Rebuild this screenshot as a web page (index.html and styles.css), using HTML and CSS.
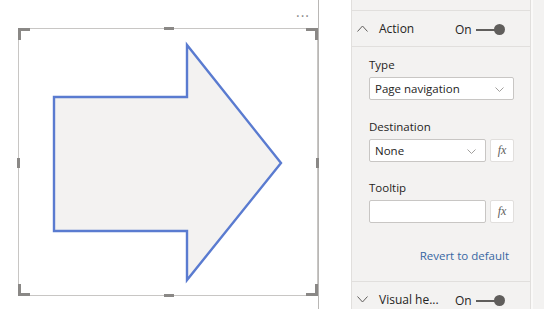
FILE: index.html
```html
<!DOCTYPE html>
<html lang="en">
<head>
    <meta charset="UTF-8">
    <title>Action</title>
    <link rel="stylesheet" href="styles.css">
</head>
<body>
    <div class="canvas">
        <div class="more">&middot;&middot;&middot;</div>
        <div class="visual">
            <span class="grip tl"></span>
            <span class="grip tr"></span>
            <span class="grip bl"></span>
            <span class="grip br"></span>
            <span class="bar top"></span>
            <span class="bar bottom"></span>
            <span class="bar left"></span>
            <span class="bar right"></span>
            <svg class="shape" width="298" height="266" viewBox="0 0 298 266">
                <polygon points="35,68 168,68 168,16 262,134 168,251 168,202 35,202" fill="#f3f2f1" stroke="#5a7bd0" stroke-width="2.4" stroke-linejoin="miter"/>
            </svg>
        </div>
    </div>

    <div class="pane">
        <div class="pane-top"></div>

        <div class="card-head">
            <svg class="chev" width="11" height="7" viewBox="0 0 11 7"><polyline points="0.5,6.5 5.5,1 10.5,6.5" fill="none" stroke="#605e5c" stroke-width="1"/></svg>
            <span class="card-title">Action</span>
            <span class="toggle">On <span class="track"></span><span class="knob"></span></span>
        </div>

        <div class="card-body">
            <label class="field-label">Type</label>
            <div class="select wide">Page navigation
                <svg class="dd" width="9" height="5" viewBox="0 0 9 5"><polyline points="0.5,0.5 4.5,4.5 8.5,0.5" fill="none" stroke="#a19f9d" stroke-width="1"/></svg>
            </div>

            <label class="field-label">Destination</label>
            <div class="field-row">
                <div class="select">None
                    <svg class="dd" width="9" height="5" viewBox="0 0 9 5"><polyline points="0.5,0.5 4.5,4.5 8.5,0.5" fill="none" stroke="#a19f9d" stroke-width="1"/></svg>
                </div>
                <button class="fx">fx</button>
            </div>

            <label class="field-label">Tooltip</label>
            <div class="field-row">
                <div class="select"></div>
                <button class="fx">fx</button>
            </div>

            <div class="revert">Revert to default</div>
        </div>

        <div class="card-head">
            <svg class="chev" width="11" height="7" viewBox="0 0 11 7"><polyline points="0.5,0.5 5.5,6 10.5,0.5" fill="none" stroke="#605e5c" stroke-width="1"/></svg>
            <span class="card-title">Visual he...</span>
            <span class="toggle">On <span class="track"></span><span class="knob"></span></span>
        </div>
    </div>

    <div class="scroll"></div>
</body>
</html>
```

FILE: styles.css
```css
body {
    margin: 0;
    height: 309px;
    overflow: hidden;
    display: flex;
    background-color: #fff;
    font-family: "Open Sans", "Noto Sans", sans-serif;
    font-size: 11.5px;
    color: #252423;
}

.canvas {
    position: relative;
    width: 319px;
    box-sizing: border-box;
    padding: 28px 0 0 18px;
    border-right: 1px solid #b9b7b5;
}

.more {
    position: absolute;
    top: 6px;
    left: 296px;
    color: #8a8886;
    font-size: 14px;
    letter-spacing: 1px;
}

.visual {
    position: relative;
    width: 300px;
    height: 268px;
    box-sizing: border-box;
    border: 1px solid #c8c6c4;
}

.shape {
    display: block;
}

.grip {
    position: absolute;
    width: 9px;
    height: 9px;
    border-color: #8a8886;
    border-style: solid;
    border-width: 0;
}

.grip.tl { top: -1px; left: -1px; border-top-width: 3px; border-left-width: 3px; }
.grip.tr { top: -1px; right: -1px; border-top-width: 3px; border-right-width: 3px; }
.grip.bl { bottom: -1px; left: -1px; border-bottom-width: 3px; border-left-width: 3px; }
.grip.br { bottom: -1px; right: -1px; border-bottom-width: 3px; border-right-width: 3px; }

.bar {
    position: absolute;
    background-color: #8a8886;
}

.bar.top { top: -2px; left: 145px; width: 10px; height: 3px; }
.bar.bottom { bottom: -2px; left: 145px; width: 10px; height: 3px; }
.bar.left { left: -2px; top: 129px; width: 3px; height: 10px; }
.bar.right { right: -2px; top: 129px; width: 3px; height: 10px; }

.pane {
    margin-left: 32px;
    width: 180px;
    box-sizing: border-box;
    background-color: #f3f2f1;
    border-left: 1px solid #e1dfdd;
    border-right: 1px solid #e1dfdd;
}

.pane-top {
    height: 10px;
    border-bottom: 1px solid #e1dfdd;
}

.card-head {
    position: relative;
    display: flex;
    align-items: center;
    height: 35px;
    padding-left: 5px;
    border-bottom: 1px solid #e1dfdd;
    font-size: 12px;
}

.chev {
    display: block;
}

.card-title {
    margin-left: 11px;
}

.toggle {
    position: absolute;
    left: 103px;
    top: 10px;
    display: flex;
    align-items: center;
}

.track {
    width: 19px;
    height: 2px;
    margin-left: 4px;
    background-color: #605e5c;
}

.knob {
    width: 11px;
    height: 11px;
    border-radius: 50%;
    background-color: #605e5c;
    margin-left: -1px;
}

.card-body {
    padding: 10px 15px 17px 17px;
    border-bottom: 1px solid #e1dfdd;
}

.field-label {
    display: block;
    height: 16px;
    line-height: 16px;
    margin-bottom: 4px;
}

.select {
    position: relative;
    width: 117px;
    height: 23px;
    box-sizing: border-box;
    line-height: 21px;
    padding-left: 5px;
    background-color: #fff;
    border: 1px solid #c8c6c4;
    border-radius: 2px;
}

.select.wide {
    width: 145px;
    margin-bottom: 19px;
}

.dd {
    position: absolute;
    right: 9px;
    top: 9px;
}

.field-row {
    display: flex;
    gap: 4px;
    margin-bottom: 18px;
}

.fx {
    width: 24px;
    height: 23px;
    padding: 0;
    border: 1px solid #e1dfdd;
    border-radius: 2px;
    background-color: #fff;
    color: #605e5c;
    font-family: "Liberation Serif", serif;
    font-style: italic;
    font-size: 12px;
}

.revert {
    margin-top: 25px;
    text-align: right;
    padding-right: 6px;
    line-height: 16px;
    color: #3767a3;
}

.scroll {
    flex: 1;
    background-color: #f3f2f1;
    border-left: 2px solid #faf9f8;
}
```
